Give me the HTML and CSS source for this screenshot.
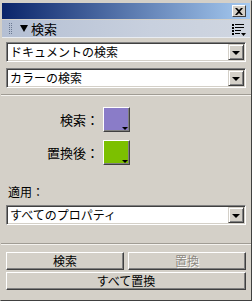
FILE: index.html
```html
<!DOCTYPE html>
<html lang="ja">
<head>
<meta charset="utf-8">
<link rel="stylesheet" href="styles.css">
</head>
<body>
<div class="win">
  <div class="titlebar">
    <div class="close">
      <svg width="8" height="7" viewBox="0 0 8 7"><path d="M0 0h2l2 2 2-2h2L5 3.5 8 7H6L4 5 2 7H0l3-3.5z" fill="#000"/></svg>
    </div>
  </div>
  <div class="header">
    <svg class="grip" width="3" height="12" viewBox="0 0 3 12">
      <rect x="0" y="0" width="1" height="1" fill="#6a7890"/><rect x="2" y="0" width="1" height="1" fill="#6a7890"/>
      <rect x="0" y="2" width="1" height="1" fill="#6a7890"/><rect x="2" y="2" width="1" height="1" fill="#6a7890"/>
      <rect x="0" y="4" width="1" height="1" fill="#6a7890"/><rect x="2" y="4" width="1" height="1" fill="#6a7890"/>
      <rect x="0" y="6" width="1" height="1" fill="#6a7890"/><rect x="2" y="6" width="1" height="1" fill="#6a7890"/>
      <rect x="0" y="8" width="1" height="1" fill="#6a7890"/><rect x="2" y="8" width="1" height="1" fill="#6a7890"/>
      <rect x="0" y="10" width="1" height="1" fill="#6a7890"/><rect x="2" y="10" width="1" height="1" fill="#6a7890"/>
    </svg>
    <svg class="tri" width="8" height="7" viewBox="0 0 8 7"><path d="M0 0h8L4 7z" fill="#000"/></svg>
    <span class="htitle">検索</span>
    <svg class="menu" width="14" height="12" viewBox="0 0 14 12">
      <rect x="0" y="0" width="2" height="2" fill="#000"/><rect x="3" y="0" width="9" height="1" fill="#000"/>
      <rect x="0" y="3" width="2" height="2" fill="#000"/><rect x="3" y="3" width="9" height="1" fill="#000"/>
      <rect x="0" y="6" width="2" height="2" fill="#000"/><rect x="3" y="6" width="6" height="1" fill="#000"/>
      <rect x="0" y="9" width="2" height="2" fill="#000"/><rect x="3" y="9" width="5" height="1" fill="#000"/>
      <path d="M9 9h5l-2.5 3z" fill="#000"/>
    </svg>
  </div>
  <div class="body">
    <div class="select"><span class="val">ドキュメントの検索</span><span class="arrow"><i></i></span></div>
    <div class="select"><span class="val">カラーの検索</span><span class="arrow"><i></i></span></div>
    <div class="sep"></div>
    <div class="swrow"><span class="lbl">検索：</span><span class="swatch purple"><i></i></span></div>
    <div class="swrow"><span class="lbl">置換後：</span><span class="swatch green"><i></i></span></div>
    <div class="apply">適用：</div>
    <div class="select"><span class="val">すべてのプロパティ</span><span class="arrow"><i></i></span></div>
    <div class="sep sep2"></div>
    <div class="btnrow">
      <div class="btn">検索</div>
      <div class="btn disabled">置換</div>
    </div>
    <div class="btn full">すべて置換</div>
  </div>
</div>
</body>
</html>
```
FILE: styles.css
```css
html, body { margin: 0; padding: 0; background: #d4d0c8; }
body { font-family: "Noto Sans CJK JP", "Noto Sans", sans-serif; font-size: 12px; color: #000; }
.win {
  width: 252px; height: 301px; box-sizing: border-box;
  border: 1px solid; border-color: #d4d0c8 #404040 #404040 #d4d0c8;
  background: #d4d0c8; display: flex; flex-direction: column;
}
.win > * { flex: none; }
.titlebar {
  margin: 2px 1px 0 1px; height: 16px;
  background: linear-gradient(to right, #0a246a, #a6caf0);
  display: flex; justify-content: flex-end; align-items: center; padding-right: 4px;
}
.close {
  width: 14px; height: 12px; box-sizing: border-box; background: #d4d0c8;
  border: 1px solid; border-color: #fff #404040 #404040 #fff;
  display: flex; align-items: center; justify-content: center;
}
.header {
  margin: 1px 1px 0 1px; height: 17px;
  background: linear-gradient(to right, #b4bfd3, #c8d0de 60%, #d0d6e0);
  border-bottom: 1px solid #e8ecf2;
  display: flex; align-items: center; padding: 0 4px 0 6px;
}
.header > * { flex: none; }
.grip { margin-left: 1px; margin-right: 8px; }
.tri { margin-right: 3px; }
.htitle { font-size: 13px; line-height: 1; }
.menu { margin-left: auto; margin-right: 0; margin-top: 2px; }
.body { padding: 4px 5px 0 5px; display: flex; flex-direction: column; }
.select {
  height: 20px; box-sizing: border-box; background: #fff;
  border: 1px solid; border-color: #808080 #fff #fff #808080;
  box-shadow: inset 1px 1px 0 #404040, inset -1px -1px 0 #d4d0c8;
  display: flex; align-items: center; margin-bottom: 6px;
}
.val { flex: 1; padding-left: 3px; line-height: 1; }
.arrow {
  width: 16px; height: 16px; box-sizing: border-box; margin-right: 1px;
  background: #d4d0c8; border: 1px solid; border-color: #d4d0c8 #404040 #404040 #d4d0c8;
  box-shadow: inset 1px 1px 0 #fff, inset -1px -1px 0 #808080;
  display: flex; align-items: center; justify-content: center;
}
.arrow i { width: 0; height: 0; border-left: 4px solid transparent; border-right: 4px solid transparent; border-top: 4px solid #000; margin-top: 1px; }
.sep { height: 0; border-top: 1px solid #a09c94; border-bottom: 1px solid #f4f2ee; margin: 0 -5px 11px; }
.swrow { display: flex; align-items: center; justify-content: flex-start; margin-bottom: 8px; }
.lbl { width: 93px; text-align: right; padding-right: 4px; font-size: 13px; }
.swatch {
  width: 27px; height: 25px; box-sizing: border-box; position: relative;
  border: 1px solid; border-color: #fff #404040 #404040 #fff;
  box-shadow: inset -1px -1px 0 #808080;
}
.swatch i { position: absolute; right: 1px; bottom: 1px; width: 0; height: 0; border-left: 3px solid transparent; border-right: 3px solid transparent; border-top: 3px solid #000; }
.purple { background: #8a7cc8; }
.green { background: #7cc000; }
.apply { margin: 10px 0 5px 2px; font-size: 12px; }
.sep2 { margin: 12px -5px 7px; }
.btnrow { display: flex; gap: 4px; margin-bottom: 2px; }
.btn {
  height: 18px; box-sizing: border-box; flex: 1;
  border: 1px solid; border-color: #fff #404040 #404040 #fff;
  box-shadow: inset -1px -1px 0 #808080;
  display: flex; align-items: center; justify-content: center; font-size: 12px; line-height: 1;
}
.disabled { color: #8c8880; text-shadow: 1px 1px 0 #fff; }
.full { flex: none; }
```
